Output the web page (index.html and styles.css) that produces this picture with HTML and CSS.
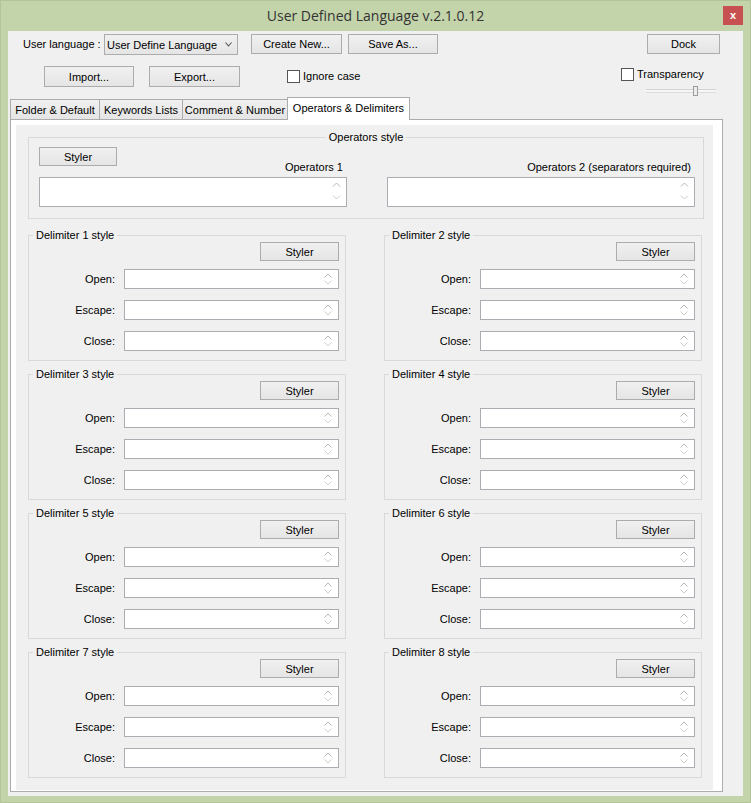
FILE: index.html
```html
<!DOCTYPE html>
<html>
<head>
<meta charset="utf-8">
<title>User Defined Language</title>
<link rel="stylesheet" href="styles.css">
</head>
<body>
<div class="window">
  <div class="titlebar">
    <span class="tb-spacer"></span>
    <span class="title">User Defined Language v.2.1.0.12</span>
    <span class="close-wrap"><span class="close">x</span></span>
  </div>
  <div class="client">
    <div class="toolbar">
      <div class="row row1">
        <span class="lbl-lang">User language :</span>
        <div class="combo"><span>User Define Language</span><svg class="chev" width="7" height="5" viewBox="0 0 7 5"><polyline points="0.5,0.5 3.5,4 6.5,0.5" fill="none" stroke="#555" stroke-width="1.1"/></svg></div>
        <button class="btn btn-create">Create New...</button>
        <button class="btn btn-save">Save As...</button>
        <button class="btn btn-dock">Dock</button>
      </div>
      <div class="row row2">
        <button class="btn btn-import">Import...</button>
        <button class="btn btn-export">Export...</button>
        <label class="check ignore"><span class="box"></span>Ignore case</label>
        <div class="transp">
          <label class="check"><span class="box"></span>Transparency</label>
          <div class="slider"><span class="thumb"></span></div>
        </div>
      </div>
    </div>
    <div class="tabs">
      <span class="tab t1">Folder &amp; Default</span>
      <span class="tab t2">Keywords Lists</span>
      <span class="tab t3">Comment &amp; Number</span>
      <span class="tab active">Operators &amp; Delimiters</span>
    </div>
    <div class="panel">
      <div class="page">
        <fieldset class="ops">
          <legend align="center" class="ops-legend">Operators style</legend>
          <div class="ops-body">
            <div class="col">
              <div class="col-head">
                <button class="btn styler-ops">Styler</button>
                <span class="col-label">Operators 1</span>
              </div>
              <div class="area"><svg width="9" height="20" viewBox="0 0 9 20"><polyline points="1,5.5 4.5,2 8,5.5" fill="none" stroke="#b5b5b5"/><polyline points="1,14.5 4.5,18 8,14.5" fill="none" stroke="#cccccc"/></svg></div>
            </div>
            <div class="col">
              <div class="col-head end">
                <span class="col-label">Operators 2 (separators required)</span>
              </div>
              <div class="area"><svg width="9" height="20" viewBox="0 0 9 20"><polyline points="1,5.5 4.5,2 8,5.5" fill="none" stroke="#b5b5b5"/><polyline points="1,14.5 4.5,18 8,14.5" fill="none" stroke="#cccccc"/></svg></div>
            </div>
          </div>
        </fieldset>

        <div class="delims">
          <fieldset class="delim">
            <legend>Delimiter 1 style</legend>
            <div class="dbody">
              <div class="styler-row"><button class="btn styler">Styler</button></div>
              <div class="frow"><span class="flabel">Open:</span><div class="field"><svg width="8" height="12" viewBox="0 0 8 12"><polyline points="0.5,4.5 4,1 7.5,4.5" fill="none" stroke="#b5b5b5"/><polyline points="0.5,7.5 4,11 7.5,7.5" fill="none" stroke="#cfcfcf"/></svg></div></div>
              <div class="frow"><span class="flabel">Escape:</span><div class="field"><svg width="8" height="12" viewBox="0 0 8 12"><polyline points="0.5,4.5 4,1 7.5,4.5" fill="none" stroke="#b5b5b5"/><polyline points="0.5,7.5 4,11 7.5,7.5" fill="none" stroke="#cfcfcf"/></svg></div></div>
              <div class="frow"><span class="flabel">Close:</span><div class="field"><svg width="8" height="12" viewBox="0 0 8 12"><polyline points="0.5,4.5 4,1 7.5,4.5" fill="none" stroke="#b5b5b5"/><polyline points="0.5,7.5 4,11 7.5,7.5" fill="none" stroke="#cfcfcf"/></svg></div></div>
            </div>
          </fieldset>
          <fieldset class="delim">
            <legend>Delimiter 2 style</legend>
            <div class="dbody">
              <div class="styler-row"><button class="btn styler">Styler</button></div>
              <div class="frow"><span class="flabel">Open:</span><div class="field"><svg width="8" height="12" viewBox="0 0 8 12"><polyline points="0.5,4.5 4,1 7.5,4.5" fill="none" stroke="#b5b5b5"/><polyline points="0.5,7.5 4,11 7.5,7.5" fill="none" stroke="#cfcfcf"/></svg></div></div>
              <div class="frow"><span class="flabel">Escape:</span><div class="field"><svg width="8" height="12" viewBox="0 0 8 12"><polyline points="0.5,4.5 4,1 7.5,4.5" fill="none" stroke="#b5b5b5"/><polyline points="0.5,7.5 4,11 7.5,7.5" fill="none" stroke="#cfcfcf"/></svg></div></div>
              <div class="frow"><span class="flabel">Close:</span><div class="field"><svg width="8" height="12" viewBox="0 0 8 12"><polyline points="0.5,4.5 4,1 7.5,4.5" fill="none" stroke="#b5b5b5"/><polyline points="0.5,7.5 4,11 7.5,7.5" fill="none" stroke="#cfcfcf"/></svg></div></div>
            </div>
          </fieldset>
          <fieldset class="delim">
            <legend>Delimiter 3 style</legend>
            <div class="dbody">
              <div class="styler-row"><button class="btn styler">Styler</button></div>
              <div class="frow"><span class="flabel">Open:</span><div class="field"><svg width="8" height="12" viewBox="0 0 8 12"><polyline points="0.5,4.5 4,1 7.5,4.5" fill="none" stroke="#b5b5b5"/><polyline points="0.5,7.5 4,11 7.5,7.5" fill="none" stroke="#cfcfcf"/></svg></div></div>
              <div class="frow"><span class="flabel">Escape:</span><div class="field"><svg width="8" height="12" viewBox="0 0 8 12"><polyline points="0.5,4.5 4,1 7.5,4.5" fill="none" stroke="#b5b5b5"/><polyline points="0.5,7.5 4,11 7.5,7.5" fill="none" stroke="#cfcfcf"/></svg></div></div>
              <div class="frow"><span class="flabel">Close:</span><div class="field"><svg width="8" height="12" viewBox="0 0 8 12"><polyline points="0.5,4.5 4,1 7.5,4.5" fill="none" stroke="#b5b5b5"/><polyline points="0.5,7.5 4,11 7.5,7.5" fill="none" stroke="#cfcfcf"/></svg></div></div>
            </div>
          </fieldset>
          <fieldset class="delim">
            <legend>Delimiter 4 style</legend>
            <div class="dbody">
              <div class="styler-row"><button class="btn styler">Styler</button></div>
              <div class="frow"><span class="flabel">Open:</span><div class="field"><svg width="8" height="12" viewBox="0 0 8 12"><polyline points="0.5,4.5 4,1 7.5,4.5" fill="none" stroke="#b5b5b5"/><polyline points="0.5,7.5 4,11 7.5,7.5" fill="none" stroke="#cfcfcf"/></svg></div></div>
              <div class="frow"><span class="flabel">Escape:</span><div class="field"><svg width="8" height="12" viewBox="0 0 8 12"><polyline points="0.5,4.5 4,1 7.5,4.5" fill="none" stroke="#b5b5b5"/><polyline points="0.5,7.5 4,11 7.5,7.5" fill="none" stroke="#cfcfcf"/></svg></div></div>
              <div class="frow"><span class="flabel">Close:</span><div class="field"><svg width="8" height="12" viewBox="0 0 8 12"><polyline points="0.5,4.5 4,1 7.5,4.5" fill="none" stroke="#b5b5b5"/><polyline points="0.5,7.5 4,11 7.5,7.5" fill="none" stroke="#cfcfcf"/></svg></div></div>
            </div>
          </fieldset>
          <fieldset class="delim">
            <legend>Delimiter 5 style</legend>
            <div class="dbody">
              <div class="styler-row"><button class="btn styler">Styler</button></div>
              <div class="frow"><span class="flabel">Open:</span><div class="field"><svg width="8" height="12" viewBox="0 0 8 12"><polyline points="0.5,4.5 4,1 7.5,4.5" fill="none" stroke="#b5b5b5"/><polyline points="0.5,7.5 4,11 7.5,7.5" fill="none" stroke="#cfcfcf"/></svg></div></div>
              <div class="frow"><span class="flabel">Escape:</span><div class="field"><svg width="8" height="12" viewBox="0 0 8 12"><polyline points="0.5,4.5 4,1 7.5,4.5" fill="none" stroke="#b5b5b5"/><polyline points="0.5,7.5 4,11 7.5,7.5" fill="none" stroke="#cfcfcf"/></svg></div></div>
              <div class="frow"><span class="flabel">Close:</span><div class="field"><svg width="8" height="12" viewBox="0 0 8 12"><polyline points="0.5,4.5 4,1 7.5,4.5" fill="none" stroke="#b5b5b5"/><polyline points="0.5,7.5 4,11 7.5,7.5" fill="none" stroke="#cfcfcf"/></svg></div></div>
            </div>
          </fieldset>
          <fieldset class="delim">
            <legend>Delimiter 6 style</legend>
            <div class="dbody">
              <div class="styler-row"><button class="btn styler">Styler</button></div>
              <div class="frow"><span class="flabel">Open:</span><div class="field"><svg width="8" height="12" viewBox="0 0 8 12"><polyline points="0.5,4.5 4,1 7.5,4.5" fill="none" stroke="#b5b5b5"/><polyline points="0.5,7.5 4,11 7.5,7.5" fill="none" stroke="#cfcfcf"/></svg></div></div>
              <div class="frow"><span class="flabel">Escape:</span><div class="field"><svg width="8" height="12" viewBox="0 0 8 12"><polyline points="0.5,4.5 4,1 7.5,4.5" fill="none" stroke="#b5b5b5"/><polyline points="0.5,7.5 4,11 7.5,7.5" fill="none" stroke="#cfcfcf"/></svg></div></div>
              <div class="frow"><span class="flabel">Close:</span><div class="field"><svg width="8" height="12" viewBox="0 0 8 12"><polyline points="0.5,4.5 4,1 7.5,4.5" fill="none" stroke="#b5b5b5"/><polyline points="0.5,7.5 4,11 7.5,7.5" fill="none" stroke="#cfcfcf"/></svg></div></div>
            </div>
          </fieldset>
          <fieldset class="delim">
            <legend>Delimiter 7 style</legend>
            <div class="dbody">
              <div class="styler-row"><button class="btn styler">Styler</button></div>
              <div class="frow"><span class="flabel">Open:</span><div class="field"><svg width="8" height="12" viewBox="0 0 8 12"><polyline points="0.5,4.5 4,1 7.5,4.5" fill="none" stroke="#b5b5b5"/><polyline points="0.5,7.5 4,11 7.5,7.5" fill="none" stroke="#cfcfcf"/></svg></div></div>
              <div class="frow"><span class="flabel">Escape:</span><div class="field"><svg width="8" height="12" viewBox="0 0 8 12"><polyline points="0.5,4.5 4,1 7.5,4.5" fill="none" stroke="#b5b5b5"/><polyline points="0.5,7.5 4,11 7.5,7.5" fill="none" stroke="#cfcfcf"/></svg></div></div>
              <div class="frow"><span class="flabel">Close:</span><div class="field"><svg width="8" height="12" viewBox="0 0 8 12"><polyline points="0.5,4.5 4,1 7.5,4.5" fill="none" stroke="#b5b5b5"/><polyline points="0.5,7.5 4,11 7.5,7.5" fill="none" stroke="#cfcfcf"/></svg></div></div>
            </div>
          </fieldset>
          <fieldset class="delim">
            <legend>Delimiter 8 style</legend>
            <div class="dbody">
              <div class="styler-row"><button class="btn styler">Styler</button></div>
              <div class="frow"><span class="flabel">Open:</span><div class="field"><svg width="8" height="12" viewBox="0 0 8 12"><polyline points="0.5,4.5 4,1 7.5,4.5" fill="none" stroke="#b5b5b5"/><polyline points="0.5,7.5 4,11 7.5,7.5" fill="none" stroke="#cfcfcf"/></svg></div></div>
              <div class="frow"><span class="flabel">Escape:</span><div class="field"><svg width="8" height="12" viewBox="0 0 8 12"><polyline points="0.5,4.5 4,1 7.5,4.5" fill="none" stroke="#b5b5b5"/><polyline points="0.5,7.5 4,11 7.5,7.5" fill="none" stroke="#cfcfcf"/></svg></div></div>
              <div class="frow"><span class="flabel">Close:</span><div class="field"><svg width="8" height="12" viewBox="0 0 8 12"><polyline points="0.5,4.5 4,1 7.5,4.5" fill="none" stroke="#b5b5b5"/><polyline points="0.5,7.5 4,11 7.5,7.5" fill="none" stroke="#cfcfcf"/></svg></div></div>
            </div>
          </fieldset>
        </div>
      </div>
    </div>
  </div>
</div>
</body>
</html>
```

FILE: styles.css
```css
html, body {
  margin: 0;
  padding: 0;
}
body {
  width: 751px;
  height: 803px;
  overflow: hidden;
  font-family: "Liberation Sans", Arial, sans-serif;
  font-size: 11px;
  color: #000;
}
.window {
  width: 751px;
  height: 803px;
  background: #c4d4aa;
  box-shadow: inset 0 0 0 1px #b3c498;
  display: flex;
  flex-direction: column;
}
.titlebar {
  height: 31px;
  flex: none;
  display: grid;
  grid-template-columns: 1fr auto 1fr;
  align-items: start;
}
.title {
  font-family: "Open Sans", "Noto Sans", sans-serif;
  font-size: 14px;
  line-height: 20px;
  color: #333;
  padding-top: 6px;
  white-space: nowrap;
}
.close-wrap {
  justify-self: end;
  padding: 6px 8px 0 0;
}
.close {
  width: 20px;
  height: 19px;
  background: #c75050;
  color: #fff;
  font-family: "Liberation Sans", Arial, sans-serif;
  font-weight: bold;
  font-size: 11px;
  display: flex;
  align-items: center;
  justify-content: center;
  padding-bottom: 2px;
  box-sizing: border-box;
}
.client {
  margin: 0 8px;
  height: 765px;
  flex: none;
  background: #f0f0f0;
  display: flex;
  flex-direction: column;
}
.toolbar {
  padding-top: 3px;
}
.row {
  display: flex;
  align-items: flex-start;
}
.row1 {
  height: 21px;
}
.lbl-lang {
  margin-left: 15px;
  width: 81px;
  white-space: nowrap;
  line-height: 21px;
}
.btn {
  font-family: "Liberation Sans", Arial, sans-serif;
  font-size: 11px;
  color: #000;
  border: 1px solid #acacac;
  background: linear-gradient(#f0f0f0, #e5e5e5);
  padding: 0;
  margin: 0;
  box-sizing: border-box;
  height: 20px;
}
.combo {
  width: 134px;
  height: 21px;
  box-sizing: border-box;
  border: 1px solid #acacac;
  background: linear-gradient(#f0f0f0, #e5e5e5);
  display: flex;
  align-items: center;
  padding-left: 2px;
  white-space: nowrap;
}
.chev {
  margin-left: auto;
  margin-right: 5px;
}
.btn-create {
  margin-left: 13px;
  width: 91px;
}
.btn-save {
  margin-left: 6px;
  width: 90px;
}
.btn-dock {
  margin-left: auto;
  margin-right: 23px;
  width: 73px;
}
.row2 {
  margin-top: 11px;
  height: 30px;
}
.btn-import {
  margin-left: 36px;
  width: 90px;
  height: 21px;
}
.btn-export {
  margin-left: 15px;
  width: 91px;
  height: 21px;
}
.check {
  display: flex;
  align-items: center;
  gap: 3px;
  line-height: 13px;
  white-space: nowrap;
}
.box {
  width: 13px;
  height: 13px;
  box-sizing: border-box;
  border: 1px solid #555;
  background: #fff;
}
.ignore {
  margin-left: 47px;
  margin-top: 4px;
}
.transp {
  margin-left: auto;
  margin-right: 27px;
  margin-top: 2px;
  width: 95px;
}
.slider {
  margin-top: 5px;
  margin-left: 25px;
  width: 70px;
  height: 10px;
  display: flex;
  align-items: center;
  background: linear-gradient(to bottom, transparent 3px, #d3d3d3 3px, #d3d3d3 4px, #f6f6f6 4px, #f6f6f6 6px, #dcdcdc 6px, #dcdcdc 7px, transparent 7px);
}
.thumb {
  margin-left: 47px;
  width: 5px;
  height: 10px;
  box-sizing: border-box;
  border: 1px solid #9c9c9c;
  background: #ececec;
}
.tabs {
  display: flex;
  align-items: flex-end;
  height: 22px;
  margin-top: 1px;
  margin-left: 2px;
}
.tab {
  height: 20px;
  box-sizing: border-box;
  border: 1px solid #acacac;
  border-bottom: 0;
  background: linear-gradient(#f0f0f0, #e5e5e5);
  display: flex;
  align-items: center;
  justify-content: center;
  white-space: nowrap;
  padding-top: 1px;
}
.t1 {
  width: 90px;
}
.t2 {
  width: 84px;
  margin-left: -1px;
}
.t3 {
  width: 106px;
  margin-left: -1px;
}
.tab.active {
  width: 123px;
  height: 23px;
  margin-left: -1px;
  margin-bottom: -1px;
  background: #fff;
  position: relative;
  z-index: 1;
  padding-top: 0;
  padding-bottom: 2px;
}
.panel {
  margin-left: 2px;
  width: 713px;
  height: 673px;
  box-sizing: border-box;
  border: 1px solid #acacac;
  background: #fff;
  padding: 5px 9px 1px 5px;
}
.page {
  height: 100%;
  background: #f0f0f0;
  overflow: hidden;
}
fieldset {
  margin: 0;
  padding: 0;
  border: 1px solid #d9d9d9;
  min-width: 0;
}
legend {
  padding: 0 3px;
  line-height: 13px;
  white-space: nowrap;
}
.ops {
  margin: 6px 9px 0 12px;
}
.ops-legend {
  margin-left: auto;
  margin-right: auto;
}
.ops-body {
  display: flex;
  gap: 40px;
  padding: 3px 8px 11px 10px;
}
.col {
  width: 308px;
}
.col-head {
  height: 27px;
  display: flex;
  justify-content: space-between;
  align-items: flex-end;
  margin-bottom: 3px;
}
.col-head.end {
  justify-content: flex-end;
}
.col-label {
  line-height: 13px;
  padding-right: 4px;
  white-space: nowrap;
}
.styler-ops {
  align-self: flex-start;
  width: 78px;
  height: 19px;
}
.area {
  height: 30px;
  box-sizing: border-box;
  border: 1px solid #abadb3;
  background: #fff;
  display: flex;
  justify-content: flex-end;
  align-items: flex-start;
  padding: 3px 5px 0 0;
}
.delims {
  display: grid;
  grid-template-columns: 318px 318px;
  column-gap: 38px;
  row-gap: 7px;
  margin: 10px 0 0 12px;
}
.delim legend {
  margin-left: 4px;
}
.dbody {
  padding: 0 6px 9px 0;
}
.styler-row {
  display: flex;
  justify-content: flex-end;
  margin-bottom: 8px;
}
.styler {
  width: 79px;
  height: 19px;
}
.frow {
  display: grid;
  grid-template-columns: 88px 215px;
  column-gap: 7px;
  align-items: center;
}
.frow + .frow {
  margin-top: 11px;
}
.flabel {
  text-align: right;
  padding-right: 2px;
  line-height: 13px;
}
.field {
  height: 20px;
  box-sizing: border-box;
  border: 1px solid #abadb3;
  background: #fff;
  display: flex;
  align-items: center;
  justify-content: flex-end;
  padding-right: 6px;
}
```
